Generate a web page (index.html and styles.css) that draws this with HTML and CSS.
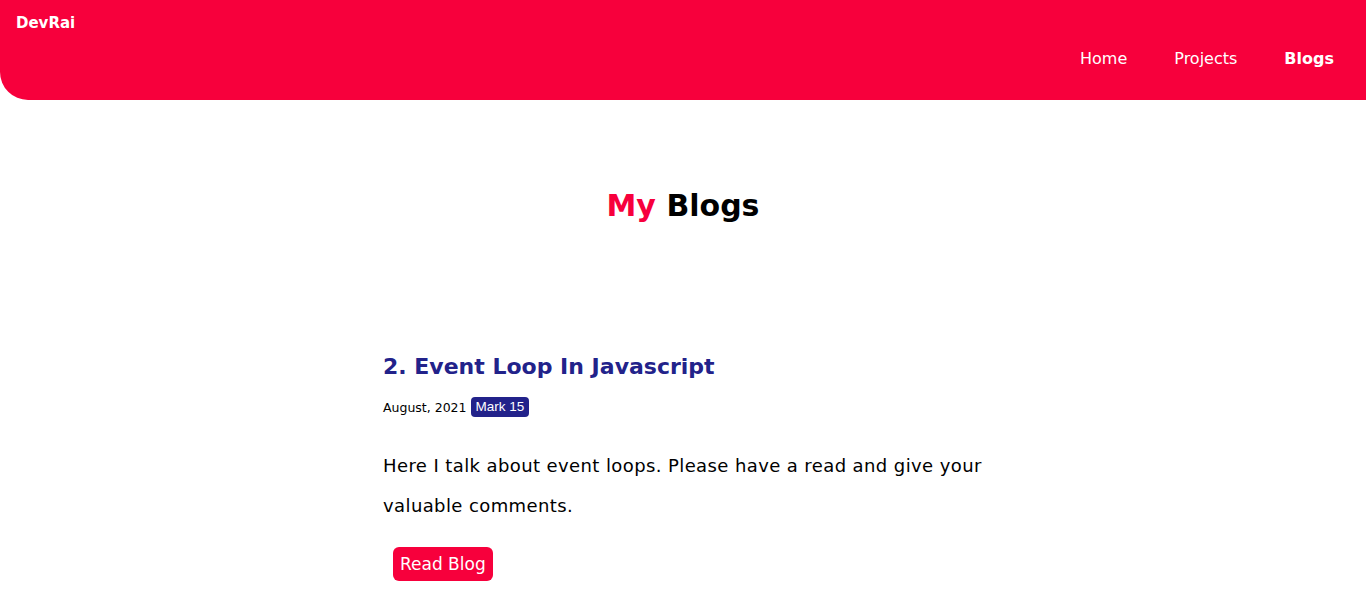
FILE: index.html
```html
<!DOCTYPE html>
<html lang="en">
<head>
<meta charset="utf-8">
<title>DevRai - Blogs</title>
<link rel="stylesheet" href="styles.css">
</head>
<body>
<header class="topbar">
  <div class="brand">DevRai</div>
  <nav class="nav">
    <a class="nav-link" href="#">Home</a>
    <a class="nav-link" href="#">Projects</a>
    <a class="nav-link active" href="#">Blogs</a>
  </nav>
</header>
<main class="page">
  <h1 class="page-title"><span class="accent">My</span> Blogs</h1>
  <article class="post">
    <h2 class="post-title">2. Event Loop In Javascript</h2>
    <div class="post-meta"><span class="post-date">August, 2021</span><span class="badge">Mark 15</span></div>
    <p class="post-text">Here I talk about event loops. Please have a read and give your valuable comments.</p>
    <a class="btn" href="#">Read Blog</a>
  </article>
</main>
</body>
</html>
```
FILE: styles.css
```css
* { box-sizing: border-box; }
html, body { margin: 0; padding: 0; background: #fff; }
body { font-family: "DejaVu Sans", "Open Sans", sans-serif; color: #000; }

.topbar {
  background: #f7003c;
  height: 100px;
  border-bottom-left-radius: 28px;
  padding: 14px 32px 0 16px;
  display: flex;
  flex-direction: column;
  color: #fff;
}
.brand { font-weight: 700; font-size: 15px; line-height: 18px; }
.nav {
  display: flex;
  justify-content: flex-end;
  gap: 47px;
  margin-top: 17px;
}
.nav-link { color: #fff; text-decoration: none; font-size: 16px; line-height: 20px; }
.nav-link.active { font-weight: 700; }

.page { width: 600px; margin: 0 auto; }
.page-title {
  text-align: center;
  font-size: 30px;
  font-weight: 700;
  margin: 86px 0 0;
  line-height: 40px;
}
.accent { color: #f7003c; }

.post { margin-top: 126px; }
.post-title {
  color: #22228a;
  font-size: 22px;
  font-weight: 700;
  margin: 0;
  line-height: 30px;
}
.post-meta { display: flex; align-items: center; gap: 4px; margin-top: 15px; font-size: 12.5px; }
.badge {
  font-family: "Liberation Sans", Arial, sans-serif;
  background: #22228a;
  color: #fff;
  font-size: 13.5px;
  padding: 2px 5px;
  border-radius: 4px;
  line-height: 16px;
}
.post-text { font-size: 18px; letter-spacing: 0.4px; line-height: 40px; margin: 29px 0 0; }
.btn {
  display: inline-block;
  margin: 21px 0 0 10px;
  background: #f7003c;
  color: #fff;
  text-decoration: none;
  font-size: 17px;
  line-height: 34px;
  padding: 0 7px;
  border-radius: 6px;
}
```
